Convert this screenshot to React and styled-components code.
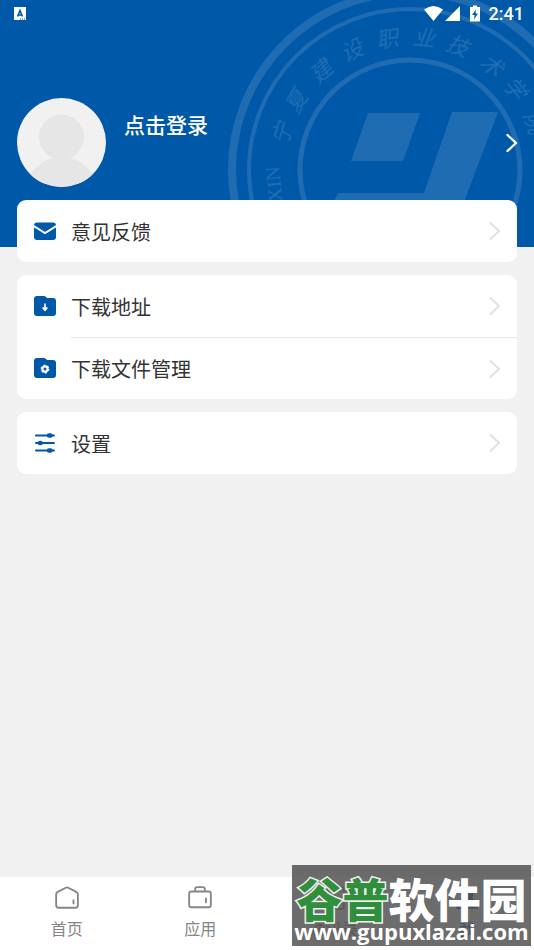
import React from 'react';
import styled, { createGlobalStyle, css } from 'styled-components';

const Global = createGlobalStyle`
  *, *::before, *::after { box-sizing: border-box; }
  body {
    margin: 0;
    background: #f1f1f1;
    font-family: Roboto, "Noto Sans CJK SC", sans-serif;
    color: #333;
  }
  button { font: inherit; color: inherit; border: 0; background: none; padding: 0; cursor: pointer; }
`;

const Screen = styled.div`
  position: relative;
  min-height: 100vh;
  display: flex;
  flex-direction: column;
`;

const Hero = styled.header`
  position: relative;
  height: 247px;
  background: #0058a8;
  color: #fff;
  overflow: hidden;
`;

const Seal = styled.svg`
  position: absolute;
  top: 0;
  right: 0;
  width: 314px;
  height: 247px;
`;

const StatusBar = styled.div`
  position: relative;
  height: 28px;
  padding: 0 10px 0 14px;
  display: flex;
  align-items: center;
  justify-content: space-between;
`;

const StatusGroup = styled.div`
  display: flex;
  align-items: center;
`;

const Clock = styled.time`
  margin-left: 5px;
  font-size: 18px;
  line-height: 28px;
  font-weight: 500;
`;

const Profile = styled.button`
  position: relative;
  width: 100%;
  margin-top: 70px;
  padding: 0 16px 0 17px;
  display: flex;
  align-items: center;
  text-align: left;
`;

const Avatar = styled.svg`
  width: 89px;
  height: 89px;
  flex: none;
`;

const ProfileName = styled.span`
  flex: 1;
  align-self: flex-start;
  margin: 13px 0 0 18px;
  font-size: 21px;
  line-height: 30px;
  font-weight: 500;
`;

const Main = styled.main`
  position: relative;
  flex: 1;
  margin-top: -47px;
  padding: 0 17px;
  display: flex;
  flex-direction: column;
  gap: 13px;
`;

const Card = styled.section`
  background: #fff;
  border-radius: 9px;
`;

const Row = styled.button`
  width: 100%;
  height: 62px;
  padding-left: 16px;
  display: flex;
  align-items: center;
  gap: 14px;
  text-align: left;
`;

const RowBody = styled.span`
  flex: 1;
  height: 100%;
  padding-right: 16px;
  display: flex;
  align-items: center;
  justify-content: space-between;
  ${(p) => p.$divided && css`border-top: 1px solid #e4e8ea;`}
`;

const RowLabel = styled.span`
  padding-top: 3px;
  font-size: 20px;
  line-height: 30px;
`;

const TabBar = styled.nav`
  height: 73px;
  background: #fff;
  display: grid;
  grid-template-columns: repeat(4, 1fr);
`;

const Tab = styled.button`
  display: flex;
  flex-direction: column;
  align-items: center;
  padding-top: 8px;
  gap: 7px;
  font-size: 16px;
  line-height: 24px;
  color: ${(p) => (p.$active ? '#0058a8' : '#858585')};
`;

const Watermark = styled.aside`
  position: absolute;
  right: 3px;
  bottom: 4px;
  width: 239px;
  height: 81px;
  padding-top: 11px;
  background: rgba(80, 80, 80, 0.84);
  color: #fff;
  white-space: nowrap;
  text-align: center;
  pointer-events: none;
`;

const Brand = styled.div`
  font-family: "Noto Sans CJK SC", sans-serif;
  font-size: 46px;
  line-height: 42px;
  font-weight: 900;
`;

const BrandAccent = styled.span`
  color: #2f8f3c;
  -webkit-text-stroke: 3px #f2f2f2;
  paint-order: stroke fill;
`;

const Site = styled.div`
  font-family: "Open Sans", sans-serif;
  font-size: 22px;
  line-height: 26px;
  font-weight: 700;
`;

const sealLetters = [
  ['宁', -74], ['夏', -59], ['建', -42], ['设', -26], ['职', -10],
  ['业', 6], ['技', 21], ['术', 38], ['学', 52], ['院', 69],
];

function SealArt() {
  return (
    <Seal viewBox="0 0 314 247" aria-hidden="true">
      <g opacity="0.12" fill="none" stroke="#fff">
        <circle cx="190" cy="170" r="178" strokeWidth="8" />
        <circle cx="190" cy="170" r="161" strokeWidth="4" />
        <circle cx="190" cy="170" r="110" strokeWidth="5" />
        <g fill="#fff" stroke="none">
          <path d="M148 113h52l-17 48h-52zM232 112h46l-51 135h-48l20-42h-87l6-12h86z" />
          <g fontSize="22" fontFamily='"Noto Sans CJK SC", sans-serif' fontWeight="400" fontStyle="italic" textAnchor="middle">
            {sealLetters.map(([char, angle]) => (
              <text key={char} x="190" y="45" transform={`rotate(${angle} 190 170)`}>{char}</text>
            ))}
          </g>
          <text x="190" y="40" fontSize="20" fontFamily='"Liberation Serif", serif' textAnchor="middle" transform="rotate(-96 190 170)">XIN</text>
        </g>
      </g>
    </Seal>
  );
}

function Chevron({ color, width = 2 }) {
  return (
    <svg width="12" height="20" viewBox="0 0 12 20" fill="none" stroke={color} strokeWidth={width} strokeLinecap="round" strokeLinejoin="round" aria-hidden="true">
      <path d="M1.500 2l8.500 8-8.500 8" />
    </svg>
  );
}

const folder = 'M4 1h7q1 0 2 1l1 1h6q3 0 3 3v12q0 3-3 3H4q-3 0-3-3V4q0-3 3-3z';

const icons = {
  mail: (
    <>
      <path fill="#0058a8" d="M4 2.500h16q3 0 3 3V17q0 3-3 3H4q-3 0-3-3V5.500q0-3 3-3z" />
      <path d="M0 5.500l12 7.500 12-7.500" fill="none" stroke="#fff" strokeWidth="2" />
    </>
  ),
  download: (
    <>
      <path fill="#0058a8" d={folder} />
      <path d="M12 8.500v4M10 13l2 2.300 2-2.300z" fill="#fff" stroke="#fff" strokeWidth="1.600" strokeLinejoin="round" />
    </>
  ),
  files: (
    <>
      <path fill="#0058a8" d={folder} />
      <circle cx="12" cy="12" r="2.600" fill="none" stroke="#fff" strokeWidth="2.200" />
      <circle cx="12" cy="12" r="3.800" fill="none" stroke="#fff" strokeWidth="1.200" strokeDasharray="2 1.980" />
    </>
  ),
  settings: (
    <g stroke="#0058a8" strokeWidth="2" strokeLinecap="round" fill="#0058a8">
      <path d="M3 3.500h18M3 11h18M3 18.500h18" />
      <path d="M16 3.500h1.500M7 11h.5M16 18.500h1.500" strokeWidth="4.500" />
    </g>
  ),
};

function MenuRow({ icon, label, divided }) {
  return (
    <Row type="button">
      <svg width="24" height="22" viewBox="0 0 24 22" aria-hidden="true">{icons[icon]}</svg>
      <RowBody $divided={divided}>
        <RowLabel>{label}</RowLabel>
        <Chevron color="#dfe2e5" />
      </RowBody>
    </Row>
  );
}

const tabIcons = {
  home: <path d="M2 8.500q0-1.500 1.500-2.200L10.800 2.500q1.200-.6 2.400 0l7.300 3.800Q22 7 22 8.500V19q0 2-2 2H4q-2 0-2-2zM18 14v3" />,
  apps: <path d="M4 6h16q2 0 2 2v10.500q0 2-2 2H4q-2 0-2-2V8q0-2 2-2zM7.500 6V4q0-2 2-2h5q2 0 2 2v2M17.500 12.500v3.500" />,
  contacts: <path d="M5 2h14q2 0 2 2v16q0 2-2 2H5q-2 0-2-2V4q0-2 2-2zM8 17q4-5 8 0M12 7v4" />,
  me: <path fill="currentColor" d="M12 3a5 5 0 0 1 3 9q6 2 6 9H3q0-7 6-9a5 5 0 0 1 3-9z" />,
};

function TabItem({ icon, label, active }) {
  return (
    <Tab type="button" $active={active} aria-current={active ? 'page' : undefined}>
      <svg width="26" height="26" viewBox="0 0 24 24" fill="none" stroke="currentColor" strokeWidth="1.700" strokeLinecap="round" aria-hidden="true">
        {tabIcons[icon]}
      </svg>
      {label}
    </Tab>
  );
}

export default function App() {
  return (
    <Screen>
      <Global />
      <Hero>
        <SealArt />
        <StatusBar>
          <svg width="12" height="14" viewBox="0 0 12 14" aria-hidden="true">
            <path fill="#fff" d="M0 0h12v13H0z" />
            <path d="M3.500 9.500L6 3.500l2.500 6M4.500 8h3" fill="none" stroke="#0058a8" strokeWidth="1.600" />
            <path d="M6 12h5" stroke="#0058a8" strokeWidth="1" strokeDasharray="1 1" />
          </svg>
          <StatusGroup>
            <svg width="60" height="18" viewBox="0 0 60 18" fill="#fff" aria-hidden="true">
              <path d="M0 4.500Q9.500-2.500 19 4.500L9.500 16zM21 16L36 1v15z" />
              <path fillRule="evenodd" d="M46 2h3V.5h4V2h3v14.500H46zM52 4.500l-4 5.500h2.500l-.5 4.500 4-6h-2.500z" />
            </svg>
            <Clock>2:41</Clock>
          </StatusGroup>
        </StatusBar>
        <Profile type="button">
          <Avatar viewBox="0 0 89 89" aria-hidden="true">
            <clipPath id="avatar-clip"><circle cx="44.500" cy="44.500" r="44.500" /></clipPath>
            <g clipPath="url(#avatar-clip)">
              <path fill="#f1f1f1" d="M0 0h89v89H0z" />
              <circle cx="44.500" cy="39" r="22.500" fill="#e6e6e6" />
              <ellipse cx="44.500" cy="91" rx="35" ry="32" fill="#e6e6e6" />
            </g>
          </Avatar>
          <ProfileName>点击登录</ProfileName>
          <Chevron color="#fff" width={2.4} />
        </Profile>
      </Hero>
      <Main>
        <Card><MenuRow icon="mail" label="意见反馈" /></Card>
        <Card>
          <MenuRow icon="download" label="下载地址" />
          <MenuRow icon="files" label="下载文件管理" divided />
        </Card>
        <Card><MenuRow icon="settings" label="设置" /></Card>
      </Main>
      <TabBar>
        <TabItem icon="home" label="首页" />
        <TabItem icon="apps" label="应用" />
        <TabItem icon="contacts" label="通讯录" />
        <TabItem icon="me" label="我" active />
      </TabBar>
      <Watermark>
        <Brand><BrandAccent>谷普</BrandAccent>软件园</Brand>
        <Site>www.gupuxlazai.com</Site>
      </Watermark>
    </Screen>
  );
}
